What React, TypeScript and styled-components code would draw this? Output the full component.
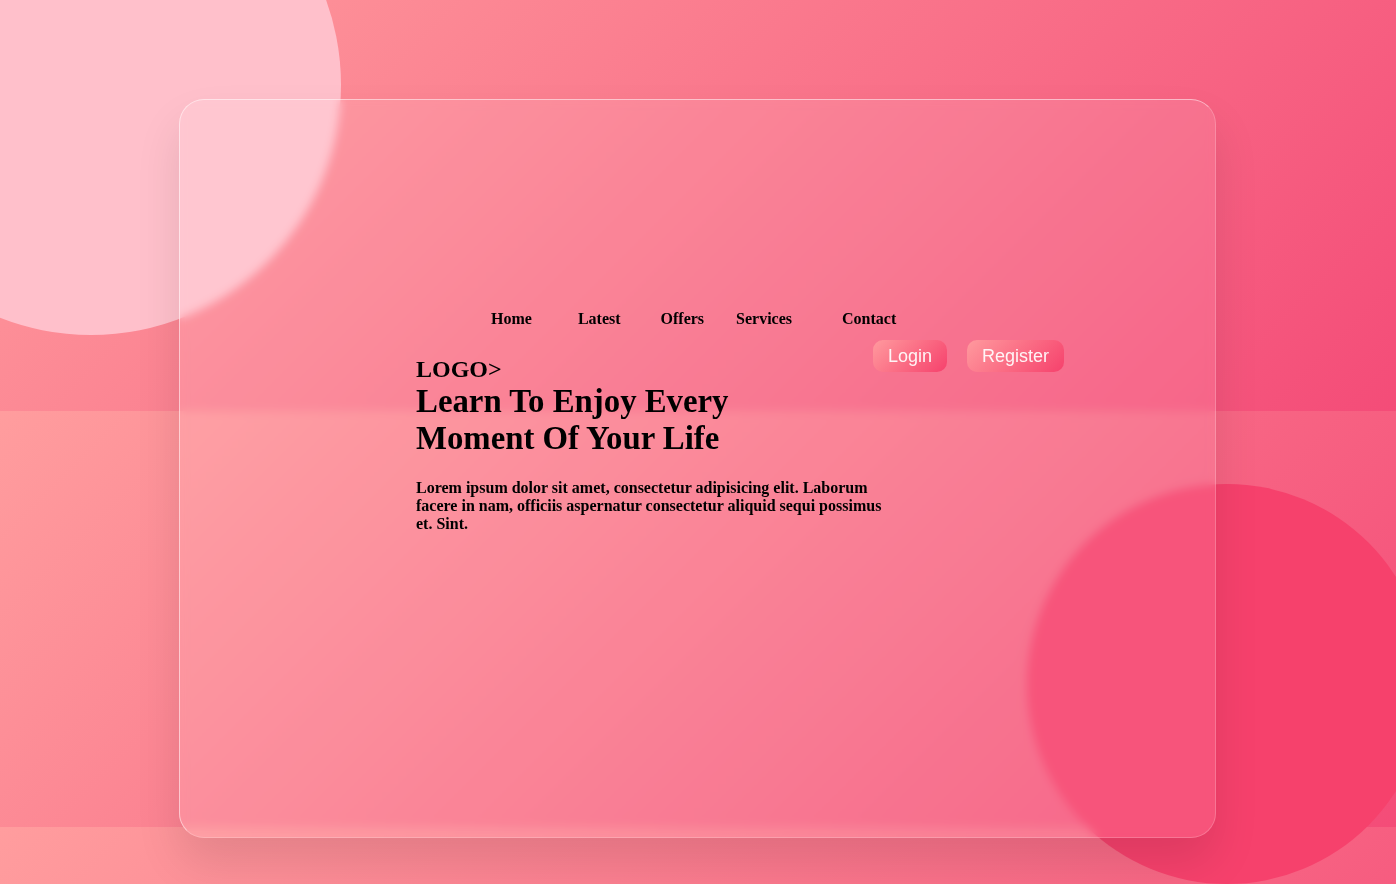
import React from "react";
import styled, { createGlobalStyle } from "styled-components";

const GlobalStyle = createGlobalStyle`
  html {
    background: linear-gradient(135deg, #ff9d9e, #f44c78);
    background-size: 100% 416px;
    background-position: 0 -5px;
  }

  body {
    margin: 0;
    font-family: "Liberation Serif", "Times New Roman", serif;
    font-weight: bold;
    color: #000;
  }
`;

const Page = styled.main`
  position: relative;
  height: 884px;
  overflow: hidden;

  display: flex;
  align-items: flex-start;

  padding: 99px 0 0 179px;
  box-sizing: border-box;
`;

const Circle = styled.div`
  position: absolute;
  border-radius: 50%;
`;

const PinkCircle = styled(Circle)`
  top: -165px;
  left: -159px;
  width: 500px;
  height: 500px;
  background: #ffc0cb;
`;

const RoseCircle = styled(Circle)`
  right: -31px;
  bottom: 0;
  width: 400px;
  height: 400px;
  background: #f6416c;
`;

const Glass = styled.section`
  position: relative;
  z-index: 1;

  width: 1037px;
  height: 739px;
  box-sizing: border-box;
  padding: 210px 0 0 236px;

  border-radius: 25px;
  border: 1px solid rgba(255, 255, 255, 0.5);
  border-right-color: rgba(255, 255, 255, 0.2);
  border-bottom-color: rgba(255, 255, 255, 0.2);
  background: rgba(255, 255, 255, 0.1);
  backdrop-filter: blur(5px);
  box-shadow: 0 25px 45px rgba(0, 0, 0, 0.1);
`;

const Content = styled.div`
  width: 648px;
`;

const Nav = styled.ul`
  display: flex;

  list-style: none;
  margin: 0;
  padding: 0 0 0 75px;
  height: 18px;

  font-size: 16px;
  line-height: 18px;
`;

const NavItem = styled.li<{ $gap: number }>`
  margin-left: ${(props) => props.$gap}px;
`;

const Main = styled.div`
  display: flex;
  align-items: flex-start;
  margin-top: 12px;
`;

const Hero = styled.div`
  flex: 0 0 457px;
  min-width: 0;
  padding-top: 16px;
`;

const Logo = styled.h2`
  margin: 0;
  font-size: 24px;
`;

const Title = styled.h1`
  width: 350px;
  margin: 0;
  font-size: 32.8px;
  line-height: 37px;
`;

const Text = styled.p`
  width: 470px;
  margin: 22px 0 0;
  font-size: 16px;
`;

const Actions = styled.div`
  display: flex;
  gap: 20px;
  margin-left: auto;
`;

const Button = styled.button`
  height: 32px;
  padding: 0 15px;

  border: none;
  border-radius: 10px;

  font-family: "Liberation Sans", Arial, sans-serif;
  font-size: 18px;
  line-height: 32px;
  color: rgba(255, 255, 255, 0.92);
  background: linear-gradient(135deg, #ff9a9e, #f6416c);

  cursor: pointer;
`;

const links = [
  { label: "Home", gap: 0 },
  { label: "Latest", gap: 46 },
  { label: "Offers", gap: 40 },
  { label: "Services", gap: 32 },
  { label: "Contact", gap: 50 },
];

const App = () => {
  return (
    <>
      <GlobalStyle />
      <Page>
        <PinkCircle />
        <RoseCircle />
        <Glass>
          <Content>
            <Nav>
              {links.map((link) => (
                <NavItem key={link.label} $gap={link.gap}>
                  {link.label}
                </NavItem>
              ))}
            </Nav>
            <Main>
              <Hero>
                <Logo>LOGO&gt;</Logo>
                <Title>Learn To Enjoy Every Moment Of Your Life</Title>
                <Text>
                  Lorem ipsum dolor sit amet, consectetur adipisicing elit.
                  Laborum facere in nam, officiis aspernatur consectetur aliquid
                  sequi possimus et. Sint.
                </Text>
              </Hero>
              <Actions>
                <Button>Login</Button>
                <Button>Register</Button>
              </Actions>
            </Main>
          </Content>
        </Glass>
      </Page>
    </>
  );
};

export default App;
